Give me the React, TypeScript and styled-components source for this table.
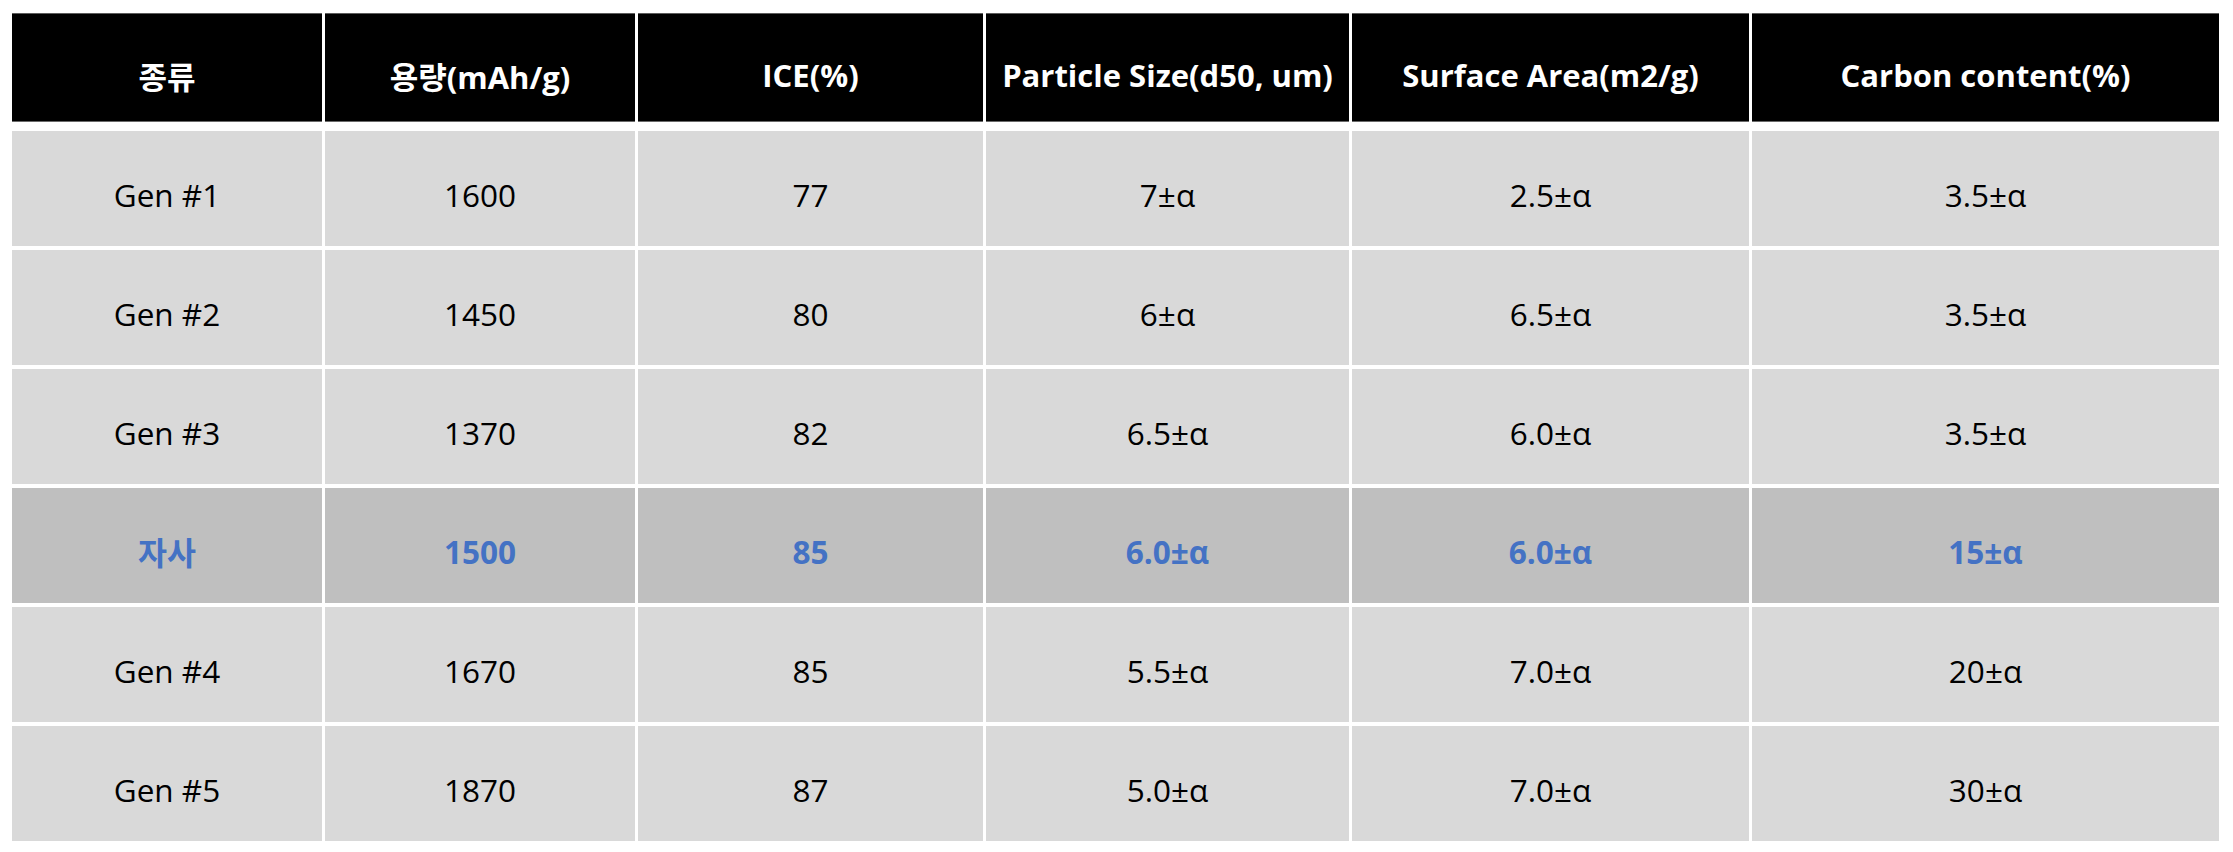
import React from 'react';
import styled, { createGlobalStyle } from 'styled-components';

const GlobalStyle = createGlobalStyle`
    html, body {
        margin: 0;
        padding: 0;
        background: #ffffff;
    }
    body {
        font-family: "Open Sans", "Noto Sans CJK KR", sans-serif;
    }
`;

const COLUMNS = '310px 310px 345px 363px 397px 467px';

const Page = styled.div`
    width: 2233px;
    height: 852px;
    padding: 13px 0 0 12px;
    box-sizing: border-box;
`;

const Table = styled.div`
    display: flex;
    flex-direction: column;
    gap: 9px;
    width: 2207px;
`;

const HeaderRow = styled.div`
    display: grid;
    grid-template-columns: ${COLUMNS};
    column-gap: 3px;
    height: 109px;
`;

const HeaderCell = styled.div`
    display: flex;
    align-items: center;
    justify-content: center;
    padding-top: 15px;
    box-sizing: border-box;
    background: #000000;
    border-top: 1px solid #5c5c5c;
    border-bottom: 1px solid #6a6a6a;
    color: #ffffff;
    font-family: "Open Sans", "Noto Sans CJK KR", sans-serif;
    font-size: 31px;
    font-weight: 700;
    white-space: nowrap;
`;

const Body = styled.div`
    display: flex;
    flex-direction: column;
    gap: 4px;
`;

const Row = styled.div`
    display: grid;
    grid-template-columns: ${COLUMNS};
    column-gap: 3px;
    height: 115px;
`;

const Cell = styled.div<{ $highlight?: boolean }>`
    display: flex;
    align-items: center;
    justify-content: center;
    padding-top: 11px;
    box-sizing: border-box;
    background: ${({ $highlight }) => ($highlight ? '#bfbfbf' : '#d9d9d9')};
    color: ${({ $highlight }) => ($highlight ? '#4472c4' : '#000000')};
    font-family: "Open Sans", "Noto Sans CJK KR", sans-serif;
    font-size: 31.5px;
    font-weight: ${({ $highlight }) => ($highlight ? 700 : 400)};
    white-space: nowrap;
`;

const headers = ['종류', '용량(mAh/g)', 'ICE(%)', 'Particle Size(d50, um)', 'Surface Area(m2/g)', 'Carbon content(%)'];

interface RowData {
    values: string[];
    highlight?: boolean;
}

const rows: RowData[] = [
    { values: ['Gen #1', '1600', '77', '7±α', '2.5±α', '3.5±α'] },
    { values: ['Gen #2', '1450', '80', '6±α', '6.5±α', '3.5±α'] },
    { values: ['Gen #3', '1370', '82', '6.5±α', '6.0±α', '3.5±α'] },
    { values: ['자사', '1500', '85', '6.0±α', '6.0±α', '15±α'], highlight: true },
    { values: ['Gen #4', '1670', '85', '5.5±α', '7.0±α', '20±α'] },
    { values: ['Gen #5', '1870', '87', '5.0±α', '7.0±α', '30±α'] },
];

const App: React.FC = () => {
    return (
        <>
            <GlobalStyle />
            <Page>
                <Table>
                    <HeaderRow>
                        {headers.map((h) => (
                            <HeaderCell key={h}>{h}</HeaderCell>
                        ))}
                    </HeaderRow>
                    <Body>
                        {rows.map((row) => (
                            <Row key={row.values[0]}>
                                {row.values.map((v, i) => (
                                    <Cell key={i} $highlight={row.highlight}>
                                        {v}
                                    </Cell>
                                ))}
                            </Row>
                        ))}
                    </Body>
                </Table>
            </Page>
        </>
    );
};

export default App;
